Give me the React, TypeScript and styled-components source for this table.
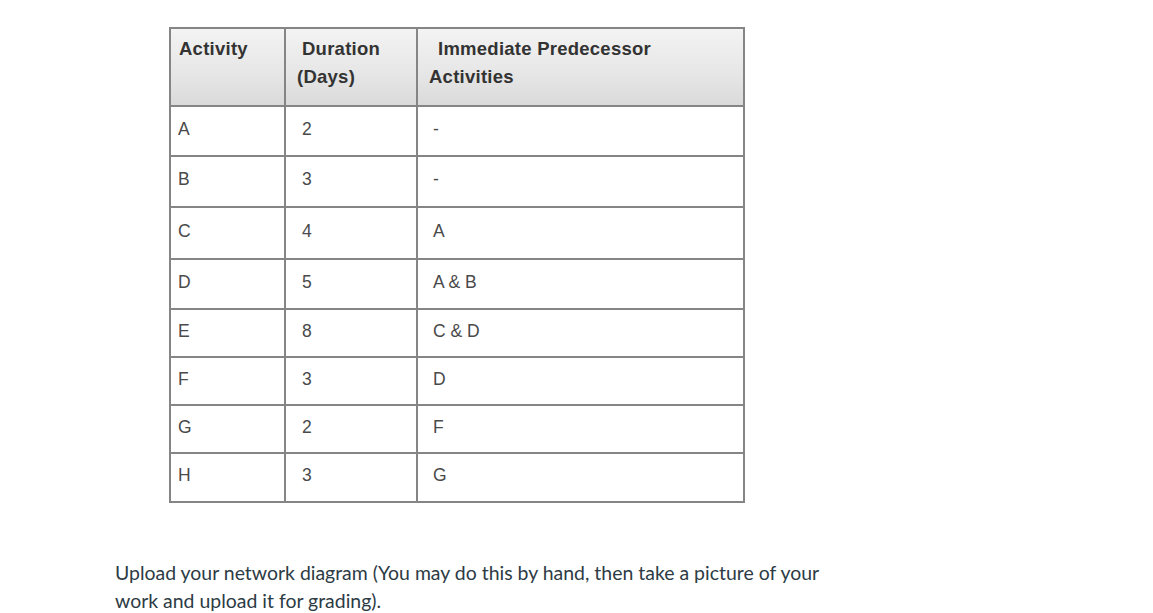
import React from "react";
import styled, { createGlobalStyle } from "styled-components";

const GlobalStyle = createGlobalStyle`
  html, body { margin: 0; padding: 0; background: #ffffff; }
  body { font-family: "Lato", "Liberation Sans", sans-serif; }
`;

const Page = styled.div`
  padding: 27px 0 0 115px;
  width: 1153px;
  height: 613px;
  box-sizing: border-box;
  overflow: hidden;
`;

const Table = styled.table`
  margin-left: 54px;
  border-collapse: collapse;
  table-layout: fixed;
  width: 574px;
  font-family: "Liberation Sans", Arial, sans-serif;
  border: 2px solid #858585;
`;

const HeadCell = styled.th<{ $w: number; $pl: number; $indent: number }>`
  width: ${(p) => p.$w}px;
  height: 76px;
  box-sizing: border-box;
  padding: 6px 4px 14px ${(p) => p.$pl}px;
  text-indent: ${(p) => p.$indent}px;
  vertical-align: top;
  text-align: left;
  font-size: 18.5px;
  letter-spacing: 0.25px;
  line-height: 28px;
  font-weight: 700;
  color: #333333;
  background: linear-gradient(to bottom, #f3f3f3 0%, #e6e6e6 60%, #dadada 100%);
  border: 2px solid #858585;
`;

const Row = styled.tr<{ $h: number }>`
  height: ${(p) => p.$h}px;
`;

const Cell = styled.td<{ $pl: number }>`
  padding: 0 4px 4px ${(p) => p.$pl}px;
  vertical-align: middle;
  font-size: 17.5px;
  color: #4a4a4a;
  border: 2px solid #858585;
`;

const Text = styled.p`
  margin: 56px 0 0 0;
  width: 745px;
  font-family: "Lato", "Liberation Sans", sans-serif;
  font-size: 19.45px;
  line-height: 28px;
  color: #2d3b45;
`;

const rows = [
  { a: "A", d: "2", p: "-", h: 50 },
  { a: "B", d: "3", p: "-", h: 51 },
  { a: "C", d: "4", p: "A", h: 52 },
  { a: "D", d: "5", p: "A & B", h: 50 },
  { a: "E", d: "8", p: "C & D", h: 48 },
  { a: "F", d: "3", p: "D", h: 48 },
  { a: "G", d: "2", p: "F", h: 48 },
  { a: "H", d: "3", p: "G", h: 49 },
];

export default function App() {
  return (
    <>
      <GlobalStyle />
      <Page>
        <Table>
          <thead>
            <tr>
              <HeadCell $w={115} $pl={8} $indent={0}>Activity</HeadCell>
              <HeadCell $w={132} $pl={11} $indent={5}>Duration<br />(Days)</HeadCell>
              <HeadCell $w={327} $pl={11} $indent={9}>Immediate Predecessor<br />Activities</HeadCell>
            </tr>
          </thead>
          <tbody>
            {rows.map((r) => (
              <Row key={r.a} $h={r.h}>
                <Cell $pl={7}>{r.a}</Cell>
                <Cell $pl={16}>{r.d}</Cell>
                <Cell $pl={15}>{r.p}</Cell>
              </Row>
            ))}
          </tbody>
        </Table>
        <Text>
          Upload your network diagram (You may do this by hand, then take a picture of your work and upload it for grading).
        </Text>
      </Page>
    </>
  );
}
